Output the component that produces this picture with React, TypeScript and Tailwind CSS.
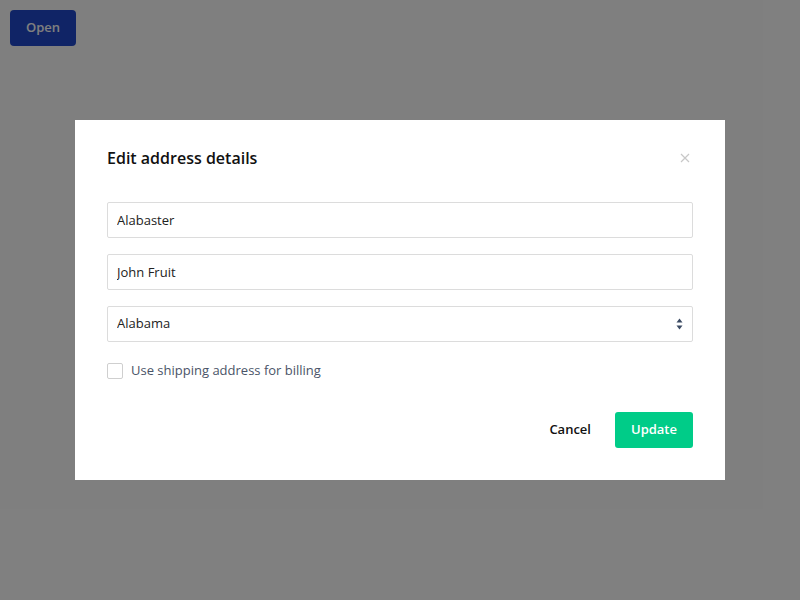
import { useState } from "react";

export default function App() {
  const [street, setStreet] = useState("Alabaster");
  const [name, setName] = useState("John Fruit");
  const [state, setState] = useState("Alabama");
  const [billing, setBilling] = useState(false);

  return (
    <div className="relative h-[600px] w-[800px] bg-white font-['Open_Sans',sans-serif]">
      <div className="p-[10px]">
        <button className="h-9 rounded bg-[#2049cc] px-4 text-[13px] font-semibold text-white">Open</button>
      </div>

      {/* overlay + dialog */}
      <div className="absolute inset-0 flex items-start justify-center bg-black/50 pt-[120px]">
        <div className="w-[650px] bg-white px-8 pb-8 pt-[28px]">
          <div className="flex h-5 items-center justify-between">
            <h2 className="text-base font-semibold leading-5 text-[#111]">Edit address details</h2>
            <button className="mr-[3px] text-[#c8c8c8]">
              <svg width="10" height="10" viewBox="0 0 10 10" fill="none" stroke="currentColor" strokeWidth="1.2">
                <path d="M1 1l8 8M9 1l-8 8" />
              </svg>
            </button>
          </div>

          <div className="mt-[34px] flex flex-col gap-4">
            <input
              value={street}
              onChange={(e) => setStreet(e.target.value)}
              className="h-9 w-full rounded-[2px] border border-[#dcdcdc] px-[9px] text-[13px] text-[#222] outline-none"
            />
            <input
              value={name}
              onChange={(e) => setName(e.target.value)}
              className="h-9 w-full rounded-[2px] border border-[#dcdcdc] px-[9px] text-[13px] text-[#222] outline-none"
            />
            <div className="relative">
              <select
                value={state}
                onChange={(e) => setState(e.target.value)}
                className="h-9 w-full appearance-none rounded-[2px] border border-[#dcdcdc] bg-white px-[9px] text-[13px] text-[#222] outline-none"
              >
                <option>Alabama</option>
                <option>Alaska</option>
                <option>Arizona</option>
              </select>
              <svg className="pointer-events-none absolute right-[10px] top-[12px]" width="7" height="12" viewBox="0 0 7 12" fill="#3b4a63">
                <path d="M3.5 0.5L6.5 4.5H0.5Z" />
                <path d="M3.5 11.5L6.5 7.5H0.5Z" />
              </svg>
            </div>
          </div>

          <label className="mt-[17px] flex h-6 cursor-pointer items-center gap-2">
            <input
              type="checkbox"
              checked={billing}
              onChange={(e) => setBilling(e.target.checked)}
              className="h-4 w-4 appearance-none rounded-[2px] border border-[#cfcfcf] bg-white"
            />
            <span className="text-[13px] text-[#4a5468]">Use shipping address for billing</span>
          </label>

          <div className="mt-[29px] flex justify-end gap-2">
            <button className="h-9 px-4 text-[13px] font-semibold text-[#111]">Cancel</button>
            <button className="h-9 rounded-[3px] bg-[#00cc88] px-4 text-[13px] font-semibold text-white">Update</button>
          </div>
        </div>
      </div>
    </div>
  );
}
